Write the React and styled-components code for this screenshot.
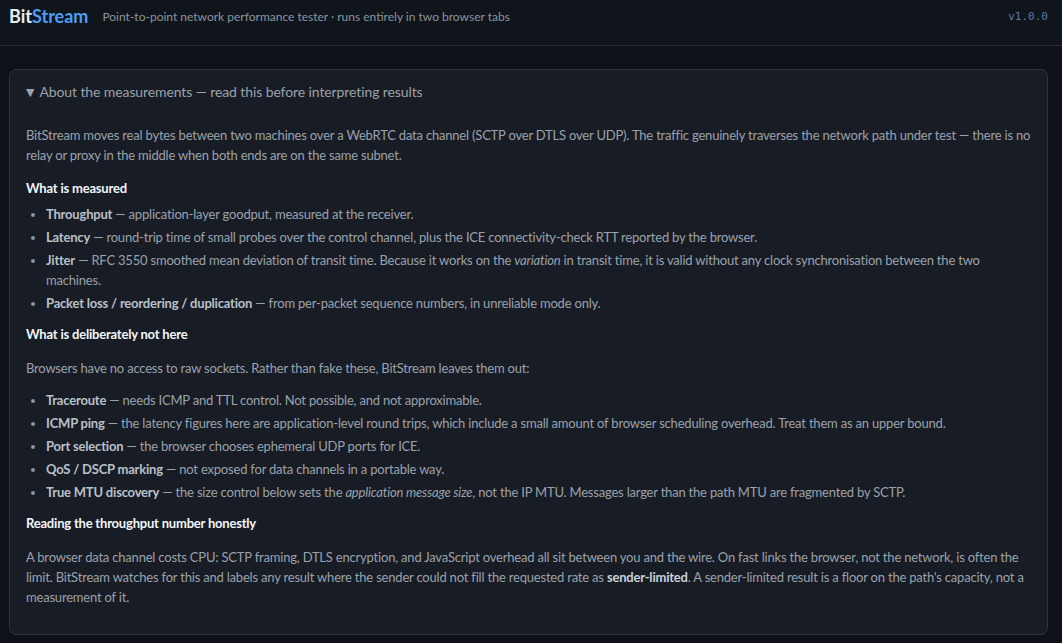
import React from "react";
import styled, { createGlobalStyle } from "styled-components";

const GlobalStyle = createGlobalStyle`
  html, body {
    margin: 0;
    padding: 0;
    background: #0e1117;
  }
  body {
    font-family: Lato, "Noto Sans", sans-serif;
    color: #9aa2ac;
  }
`;

const Page = styled.div`
  min-height: 643px;
  background: #0e1117;
`;

const Header = styled.header`
  display: flex;
  align-items: center;
  height: 46px;
  padding: 0 14px 0 9px;
  border-bottom: 1px solid #2a2f37;
  background: #10141b;
  box-sizing: border-box;
`;

const Brand = styled.div`
  font-size: 18px;
  font-weight: 700;
  color: #e6edf3;
  margin-top: -14px;

  span {
    color: #4d9cf5;
  }
`;

const Tagline = styled.div`
  margin-left: 14px;
  margin-top: -12px;
  font-size: 12px;
  color: #8b949e;
`;

const Version = styled.div`
  margin-left: auto;
  margin-top: -12px;
  font-family: "DejaVu Sans Mono", "Liberation Mono", monospace;
  font-size: 11px;
  color: #5b7aa0;
`;

const Main = styled.main`
  padding: 23px 14px 0 9px;
`;

const Card = styled.details`
  background: #181c24;
  border: 1px solid #2d333c;
  border-radius: 7px;
  padding: 12px 16px 27px;
`;

const Summary = styled.summary`
  list-style: none;
  font-size: 14px;
  line-height: 20px;
  letter-spacing: -0.1px;
  color: #9aa2ac;
  cursor: pointer;

  &::-webkit-details-marker {
    display: none;
  }
`;

const Caret = styled.span`
  display: inline-block;
  font-family: "DejaVu Sans", sans-serif;
  font-size: 11px;
  margin-right: 5px;
  vertical-align: 1px;
`;

const Body = styled.div`
  margin-top: 22px;
  font-size: 13px;
  line-height: 20px;
  letter-spacing: -0.2px;
`;

const Para = styled.p`
  margin: 0;
  color: #9aa2ac;

  b {
    color: #c9d1d9;
    font-weight: 700;
  }
`;

const Heading = styled.h4`
  margin: ${(p) => (p.$first ? "13px" : "11px")} 0 ${(p) => p.$gap || "6px"};
  font-size: 13px;
  line-height: 20px;
  font-weight: 700;
  color: #f0f6fc;
`;

const List = styled.ul`
  margin: ${(p) => p.$top || "0"} 0 0;
  padding-left: 20px;
`;

const Item = styled.li`
  margin-bottom: 3px;
  color: #9aa2ac;

  &::marker {
    color: #8b949e;
  }

  b {
    color: #b8c0c9;
    font-weight: 700;
  }
`;

const measured = [
  ["Throughput", " — application-layer goodput, measured at the receiver."],
  [
    "Latency",
    " — round-trip time of small probes over the control channel, plus the ICE connectivity-check RTT reported by the browser.",
  ],
  [
    "Jitter",
    <>
      {" "}
      — RFC 3550 smoothed mean deviation of transit time. Because it works on the <i>variation</i> in transit
      time, it is valid without any clock synchronisation between the two machines.
    </>,
  ],
  ["Packet loss / reordering / duplication", " — from per-packet sequence numbers, in unreliable mode only."],
];

const missing = [
  ["Traceroute", " — needs ICMP and TTL control. Not possible, and not approximable."],
  [
    "ICMP ping",
    " — the latency figures here are application-level round trips, which include a small amount of browser scheduling overhead. Treat them as an upper bound.",
  ],
  ["Port selection", " — the browser chooses ephemeral UDP ports for ICE."],
  ["QoS / DSCP marking", " — not exposed for data channels in a portable way."],
  [
    "True MTU discovery",
    <>
      {" "}
      — the size control below sets the <i>application message size</i>, not the IP MTU. Messages larger than
      the path MTU are fragmented by SCTP.
    </>,
  ],
];

export default function App() {
  return (
    <Page>
      <GlobalStyle />
      <Header>
        <Brand>
          Bit<span>Stream</span>
        </Brand>
        <Tagline>Point-to-point network performance tester · runs entirely in two browser tabs</Tagline>
        <Version>v1.0.0</Version>
      </Header>
      <Main>
        <Card open>
          <Summary>
            <Caret>▼</Caret>About the measurements — read this before interpreting results
          </Summary>
          <Body>
            <Para>
              BitStream moves real bytes between two machines over a WebRTC data channel (SCTP over DTLS over UDP).
              The traffic genuinely traverses the network path under test — there is no relay or proxy in the middle
              when both ends are on the same subnet.
            </Para>

            <Heading $first>What is measured</Heading>
            <List>
              {measured.map(([term, rest]) => (
                <Item key={term}>
                  <b>{term}</b>
                  {rest}
                </Item>
              ))}
            </List>

            <Heading $gap="14px">What is deliberately not here</Heading>
            <Para>Browsers have no access to raw sockets. Rather than fake these, BitStream leaves them out:</Para>
            <List $top="12px">
              {missing.map(([term, rest]) => (
                <Item key={term}>
                  <b>{term}</b>
                  {rest}
                </Item>
              ))}
            </List>

            <Heading $gap="14px">Reading the throughput number honestly</Heading>
            <Para>
              A browser data channel costs CPU: SCTP framing, DTLS encryption, and JavaScript overhead all sit between
              you and the wire. On fast links the browser, not the network, is often the limit. BitStream watches for
              this and labels any result where the sender could not fill the requested rate as{" "}
              <b>sender-limited</b>. A sender-limited result is a floor on the path's capacity, not a measurement of
              it.
            </Para>
          </Body>
        </Card>
      </Main>
    </Page>
  );
}
